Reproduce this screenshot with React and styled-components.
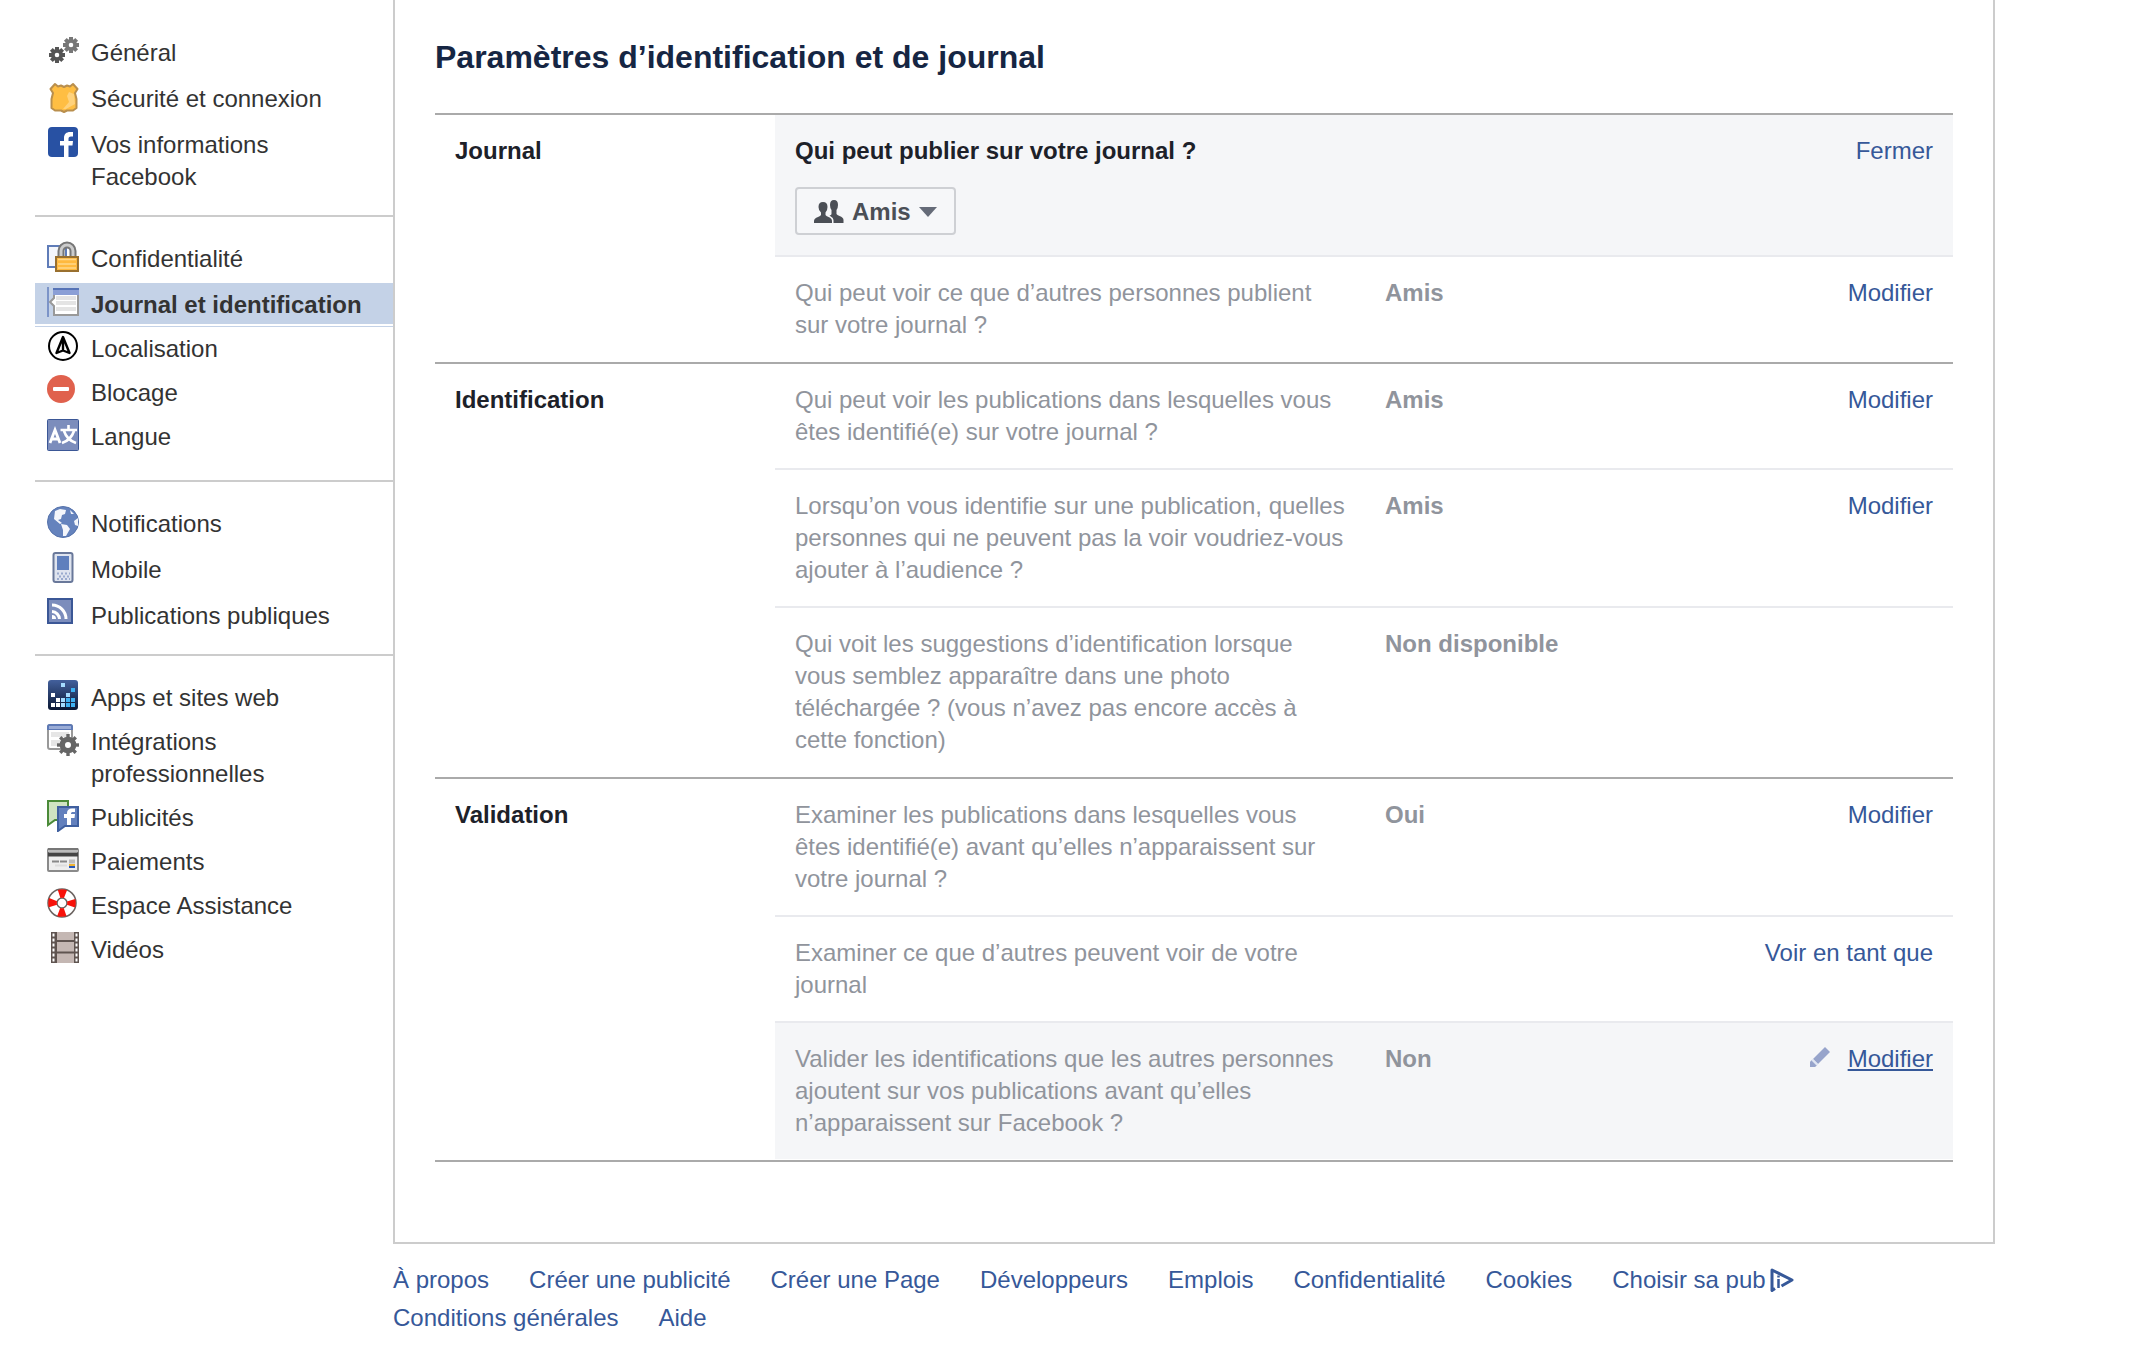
import styled, { createGlobalStyle } from "styled-components";

const GlobalStyle = createGlobalStyle`
  * {
    box-sizing: border-box;
  }
  body {
    margin: 0;
    background: #fff;
    color: #1d2129;
    font-family: "Liberation Sans", Arial, Helvetica, sans-serif;
    font-size: 24px;
    line-height: 32px;
  }
  ul {
    margin: 0;
    padding: 0;
    list-style: none;
  }
`;

const Page = styled.div`
  display: grid;
  grid-template-columns: 358px minmax(0, 1602px);
  padding: 0 35px;
`;

/* sidebar */
const Sidebar = styled.nav`
  padding-top: 11px;
`;
const NavGroup = styled.ul`
  display: flex;
  flex-direction: column;
  gap: ${({ $dense }) => ($dense ? "0" : "2px")};
  padding: 20px 0 ${({ $dense }) => ($dense ? "21px" : "16px")};
  & + & {
    border-top: 2px solid #ccc;
  }
`;
const NavItem = styled.li`
  padding-bottom: 3px;
  &:has([aria-current]) {
    margin-top: 2px;
    padding-bottom: 2px;
    border-bottom: 1px solid #c4d2e7;
  }
`;
const NavLink = styled.a`
  display: flex;
  gap: 12px;
  padding: 6px 24px 3px 12px;
  color: #333;
  text-decoration: none;
  &[aria-current] {
    background: #c4d2e7;
    font-weight: bold;
  }
  svg {
    flex: none;
    margin-top: -2px;
  }
`;

/* settings panel */
const Main = styled.main`
  padding: 39px 40px 80px;
  border: solid #ccc;
  border-width: 0 2px 2px;
`;
const Title = styled.h1`
  margin: 0;
  padding-bottom: 38px;
  color: #162643;
  font-size: 32px;
  line-height: 36px;
`;
const Sections = styled.div`
  border-bottom: 2px solid #aaa;
`;
const Section = styled.section`
  display: grid;
  grid-template-columns: 340px minmax(0, 1fr);
  padding-bottom: 1px;
  border-top: 2px solid #aaa;
`;
const SectionTitle = styled.h2`
  margin: 0;
  padding: 20px;
  font-size: 24px;
  line-height: 32px;
`;
const Row = styled.li`
  display: grid;
  grid-template-columns: 550px minmax(0, 1fr) auto;
  column-gap: 40px;
  padding: 20px;
  background: ${({ $shaded }) => ($shaded ? "#f5f6f8" : "#fff")};
  color: #90949c;
  & + & {
    border-top: 2px solid #e9eaee;
  }
`;
const Question = styled.div`
  font-weight: ${({ $open }) => ($open ? "bold" : "normal")};
  color: ${({ $open }) => ($open ? "#1d2129" : "inherit")};
`;
const Value = styled.strong`
  font-weight: bold;
`;
const Action = styled.a`
  display: flex;
  align-items: flex-start;
  gap: 18px;
  color: #365899;
  text-decoration: none;
  span {
    text-decoration: ${({ $hovered }) => ($hovered ? "underline" : "none")};
    text-decoration-thickness: 2px;
    text-underline-offset: 2px;
    text-decoration-skip-ink: none;
  }
  svg {
    margin-top: 4px;
  }
`;
const AudienceButton = styled.button`
  display: flex;
  align-items: center;
  gap: 8px;
  height: 48px;
  margin-top: 20px;
  padding: 2px 17px 0;
  border: 2px solid #ced0d4;
  border-radius: 4px;
  background: #f6f7f9;
  color: #4b4f56;
  font: bold 24px/32px "Liberation Sans", Arial, sans-serif;
`;

/* footer */
const Footer = styled.footer`
  grid-column: 2;
  padding: 17px 0;
`;
const FooterLinks = styled.ul`
  display: flex;
  flex-wrap: wrap;
  column-gap: 40px;
`;
const FooterLink = styled.a`
  display: flex;
  align-items: center;
  gap: 4px;
  color: #365899;
  line-height: 38px;
  text-decoration: none;
`;

const Svg = ({ children, size = 32, ...rest }) => (
  <svg width={size} height={size} viewBox={`0 0 ${size} ${size}`} aria-hidden="true" {...rest}>
    {children}
  </svg>
);

const Gear = ({ cx, cy, r, hole, fill, teeth = 8, tooth = 4 }) => (
  <g fill="none" stroke={fill}>
    <circle cx={cx} cy={cy} r={(r * 0.76 + hole) / 2} strokeWidth={r * 0.76 - hole} />
    {Array.from({ length: teeth }, (_, i) => (
      <path
        key={i}
        d={`M${cx} ${cy - r * 0.6}V${cy - r}`}
        strokeWidth={tooth}
        transform={`rotate(${(360 / teeth) * i} ${cx} ${cy})`}
      />
    ))}
  </g>
);

const GearsIcon = () => (
  <Svg>
    <Gear cx={10} cy={20} r={8} hole={2.3} fill="#555" />
    <Gear cx={24} cy={10} r={8} hole={2.3} fill="#777" />
  </Svg>
);
const BadgeIcon = () => (
  <Svg>
    <path
      d="M8 3L11 5.500L14 4.500L17 6L20 4.500L23 5.500L26 3L30.500 8L28 12L29.500 18V27L26 29.500H20L17 31L14 29.500H8L4.500 27V18L6 12L3.500 8Z"
      fill="#ffbe43"
      stroke="#b98f4e"
      strokeWidth="2"
      strokeLinejoin="round"
    />
    <path d="M22 11L27 13L28 23L19 28H16L22 21L20 15Z" fill="#ffd27c" />
  </Svg>
);
const FacebookIcon = () => (
  <Svg>
    <rect x="1" y="0" width="30" height="30" rx="4" fill="#2851a3" />
    <path
      d="M17 30V18.500H13V14H17V11C17 7 19.500 5 23 5H26V9.500H24C22 9.500 21.500 10.500 21.500 12V14H26L25.500 18.500H21.500V30Z"
      fill="#fff"
    />
  </Svg>
);
const LockIcon = () => (
  <Svg>
    <rect x="1" y="5" width="18" height="21" fill="#f4f6fb" stroke="#5f7cb8" strokeWidth="2" />
    <path d="M14 18V10A6 6 0 0 1 26 10V18" fill="none" stroke="#777" strokeWidth="7" />
    <path d="M14 18V10A6 6 0 0 1 26 10V18" fill="none" stroke="#ccc" strokeWidth="3" />
    <rect x="9" y="16" width="22" height="14" fill="#ffb93e" stroke="#99702f" strokeWidth="2" />
    <path d="M11 18.500H29M11 23H29M11 27H29" stroke="#ffd78a" strokeWidth="1.500" />
  </Svg>
);
const TimelineIcon = () => (
  <Svg>
    <path d="M1 0V30" stroke="#7c94c8" strokeWidth="2" />
    <path d="M7 3H31V28H7V19L3 15L7 11Z" fill="#fff" stroke="#999" strokeWidth="2" />
    <path d="M9 11H29M9 16H29M9 22H29" stroke="#e4e4e4" strokeWidth="4" />
    <path d="M6 2H32V8H6Z" fill="#8b9fd6" />
    <path d="M6 2H32" stroke="#5673b6" strokeWidth="2" />
  </Svg>
);
const LocationIcon = () => (
  <Svg>
    <circle cx="16" cy="15" r="14" fill="none" stroke="#000" strokeWidth="2" />
    <path d="M16 6L22.500 22L16 19.500L9.500 22ZM16 7V19" fill="none" stroke="#000" strokeWidth="2.400" strokeLinejoin="round" />
  </Svg>
);
const BlockIcon = () => (
  <Svg>
    <circle cx="14" cy="14" r="14" fill="#e0614d" />
    <rect x="6" y="12" width="16" height="4" rx="1" fill="#fff" />
  </Svg>
);
const LanguageIcon = () => (
  <Svg>
    <rect x=".5" y=".5" width="31" height="31" rx="1" fill="#7c8dbc" stroke="#3b5796" />
    <path d="M3 24L8 11L13 24M5 20H11" fill="none" stroke="#fff" strokeWidth="2.800" />
    <path d="M21.500 6V11M13.500 11H30M17 12Q20 21 29 24M27 12Q24 21 15 24" fill="none" stroke="#fff" strokeWidth="2.600" />
  </Svg>
);
const GlobeIcon = () => (
  <Svg>
    <circle cx="16" cy="16" r="15.500" fill="#6583bd" stroke="#5572ab" />
    <path
      d="M8 5L13 3L19 4L18 8L15 9L14 13L11 14L15 17L13 18L7 13ZM14 18L20 19L23 23L19 30L16 30L16 24ZM27 15L31 12L31 20L28 19ZM23 4L27 8L24 8Z"
      fill="#fff"
      opacity=".93"
    />
  </Svg>
);
const PhoneIcon = () => (
  <Svg>
    <rect x="6.500" y="1" width="19" height="29" rx="2" fill="#dfe4ef" stroke="#69789a" strokeWidth="2" />
    <rect x="10" y="4" width="12" height="14" fill="#5f7fbd" />
    <path d="M10 21.500H23M10 27H23" stroke="#9aaace" strokeWidth="2" strokeDasharray="2 2" />
    <path d="M12 24.500H23" stroke="#9aaace" strokeWidth="2" strokeDasharray="2 2" />
  </Svg>
);
const FeedIcon = () => (
  <Svg>
    <rect x="1" y="1" width="24" height="24" fill="#7c8dbc" stroke="#3b5796" strokeWidth="2" />
    <path d="M5 7A14 14 0 0 1 19 21M5 13.500A8 8 0 0 1 12.500 21" fill="none" stroke="#fff" strokeWidth="3" />
    <path d="M5 17A4 4 0 0 1 9 21H5Z" fill="#fff" />
  </Svg>
);
const AppsIcon = () => (
  <Svg>
    <defs>
      <linearGradient id="apps" x2="0" y2="1">
        <stop stopColor="#43609c" />
        <stop offset="1" stopColor="#0a1733" />
      </linearGradient>
    </defs>
    <rect x="1" width="30" height="30" rx="3" fill="url(#apps)" />
    <path d="M4 13h4v4h-4zM4 23h4v4h-4zM9 18h4v4h-4zM9 23h4v4h-4z" fill="#fff" />
    <path d="M14 3h4v4h-4zM14 18h4v4h-4zM14 23h4v4h-4zM19 13h4v4h-4z" fill="#a5dcff" />
    <path d="M24 8h4v4h-4zM24 18h4v4h-4zM19 18h4v4h-4zM19 23h4v4h-4zM24 23h4v4h-4z" fill="#3fb1f2" />
  </Svg>
);
const IntegrationsIcon = () => (
  <Svg>
    <rect x="1" y="1" width="24" height="24" rx="2" fill="#fff" stroke="#999" strokeWidth="2" />
    <path d="M4 8H22V13H4ZM4 16H14V22H4Z" fill="#e6e6e6" />
    <path d="M0 6V3Q0 0 3 0H23Q26 0 26 3V6Z" fill="#5c78b5" />
    <path d="M2 3.500H24" stroke="#9aacd6" strokeWidth="3" />
    <Gear cx={21} cy={21} r={11} hole={3} fill="#666" tooth={3.4} />
  </Svg>
);
const AdsIcon = () => (
  <Svg>
    <path d="M1 1H21V20H8L1 25Z" fill="#cfe3c2" stroke="#4a8a38" strokeWidth="2" />
    <path d="M11 7H31V26H18L11 31Z" fill="#6380bd" stroke="#3f5f9f" strokeWidth="2" />
    <path
      d="M20 25V18H17V14H20V13C20 10 22 8.500 25 8.500H28V12H26C24.500 12 24 12.500 24 14H28L27.500 18H24V25Z"
      fill="#fff"
    />
  </Svg>
);
const CardIcon = () => (
  <Svg>
    <rect x="1" y="5" width="30" height="22" rx="1" fill="#eee" stroke="#8a8a8a" strokeWidth="2" />
    <path d="M1 5H31" stroke="#777" strokeWidth="2" />
    <path d="M1 7H31" stroke="#bbb" strokeWidth="2" />
    <path d="M1 10.500H31" stroke="#444" strokeWidth="4" />
    <path d="M5 17.500H20" stroke="#888" strokeWidth="2" strokeDasharray="7 1" />
    <path d="M22 17.500H28" stroke="#bbb" strokeWidth="4" />
    <path d="M8 21.500H20" stroke="#ddd" strokeWidth="2" />
    <rect x="22" y="20" width="6" height="2" fill="#f0b432" />
    <rect x="22" y="22" width="6" height="2" fill="#2757b8" />
  </Svg>
);
const HelpIcon = () => (
  <Svg>
    <circle cx="15" cy="15" r="9.500" fill="none" stroke="#6b6360" strokeWidth="10.500" />
    <circle cx="15" cy="15" r="9.500" fill="none" stroke="#fff" strokeWidth="7.500" />
    <circle
      cx="15"
      cy="15"
      r="9.500"
      fill="none"
      stroke="#f8120a"
      strokeWidth="8.500"
      strokeDasharray="6.500 8.423"
      strokeDashoffset="3.250"
    />
  </Svg>
);
const FilmIcon = () => (
  <Svg>
    <rect x="4" y="0" width="28" height="31" fill="#5f5450" />
    <path d="M10 0H27V8H10ZM10 10H27V19.500H10ZM10 21.500H27V31H10Z" fill="#c4b7b3" />
    <path d="M6.500 1.500V31M29.500 1.500V31" stroke="#fff" strokeWidth="2" strokeDasharray="3 2" />
  </Svg>
);
const FriendsIcon = () => (
  <svg width="30" height="24" viewBox="0 0 30 24" aria-hidden="true">
    <g fill="#4b4f56">
      <path d="M20 0Q24 0 24 5Q24 8 22.500 10V14Q23 15 25.500 16Q29.500 17.500 29.500 20V23H19.500V20Q19 17.500 15.500 15.500Q17.500 15 17.500 14V10Q16 8 16 5Q16 0 20 0Z" />
      <path d="M9 2Q13.500 2 13.500 7Q13.500 10.500 11.500 12.500V15Q12 16 14.500 17Q18 18.500 18 21V23H0V21Q0 18.500 4 17Q6.500 16 7 15V12.500Q4.500 10.500 4.500 7Q4.500 2 9 2Z" />
    </g>
  </svg>
);
const CaretIcon = () => (
  <svg width="18" height="10" viewBox="0 0 18 10" aria-hidden="true">
    <path d="M0 0H18L9 10Z" fill="#656b78" />
  </svg>
);
const PencilIcon = () => (
  <Svg size={20}>
    <path d="M15 0L20 5L8 17L3 12Z" fill="#97a4cb" />
    <path d="M1.500 13L7 18.500L5 20H0V15Z" fill="#97a4cb" />
    <path d="M2 12.500L7.500 18" stroke="#dfe5f2" strokeWidth="2" />
  </Svg>
);
const AdChoicesIcon = () => (
  <Svg size={24}>
    <path d="M5 20.500L2 22.500V2L22 12L11.500 18" fill="none" stroke="#365899" strokeWidth="3" strokeLinejoin="round" />
    <path d="M8.500 11V20M8.500 7.500V9.500" stroke="#365899" strokeWidth="2.500" />
  </Svg>
);

const navGroups = [
  {
    items: [
      ["Général", GearsIcon],
      ["Sécurité et connexion", BadgeIcon],
      ["Vos informations Facebook", FacebookIcon],
    ],
  },
  {
    dense: true,
    items: [
      ["Confidentialité", LockIcon],
      ["Journal et identification", TimelineIcon],
      ["Localisation", LocationIcon],
      ["Blocage", BlockIcon],
      ["Langue", LanguageIcon],
    ],
  },
  {
    items: [
      ["Notifications", GlobeIcon],
      ["Mobile", PhoneIcon],
      ["Publications publiques", FeedIcon],
    ],
  },
  {
    dense: true,
    items: [
      ["Apps et sites web", AppsIcon],
      ["Intégrations professionnelles", IntegrationsIcon],
      ["Publicités", AdsIcon],
      ["Paiements", CardIcon],
      ["Espace Assistance", HelpIcon],
      ["Vidéos", FilmIcon],
    ],
  },
];

const sections = [
  {
    title: "Journal",
    rows: [
      { question: "Qui peut publier sur votre journal ?", action: "Fermer", audience: "Amis" },
      {
        question: "Qui peut voir ce que d’autres personnes publient sur votre journal ?",
        value: "Amis",
        action: "Modifier",
      },
    ],
  },
  {
    title: "Identification",
    rows: [
      {
        question: "Qui peut voir les publications dans lesquelles vous êtes identifié(e) sur votre journal ?",
        value: "Amis",
        action: "Modifier",
      },
      {
        question:
          "Lorsqu’on vous identifie sur une publication, quelles personnes qui ne peuvent pas la voir voudriez-vous ajouter à l’audience ?",
        value: "Amis",
        action: "Modifier",
      },
      {
        question:
          "Qui voit les suggestions d’identification lorsque vous semblez apparaître dans une photo téléchargée ? (vous n’avez pas encore accès à cette fonction)",
        value: "Non disponible",
      },
    ],
  },
  {
    title: "Validation",
    rows: [
      {
        question:
          "Examiner les publications dans lesquelles vous êtes identifié(e) avant qu’elles n’apparaissent sur votre journal ?",
        value: "Oui",
        action: "Modifier",
      },
      { question: "Examiner ce que d’autres peuvent voir de votre journal", action: "Voir en tant que" },
      {
        question:
          "Valider les identifications que les autres personnes ajoutent sur vos publications avant qu’elles n’apparaissent sur Facebook ?",
        value: "Non",
        action: "Modifier",
        hovered: true,
      },
    ],
  },
];

const footerLinks = [
  "À propos",
  "Créer une publicité",
  "Créer une Page",
  "Développeurs",
  "Emplois",
  "Confidentialité",
  "Cookies",
  "Choisir sa pub",
  "Conditions générales",
  "Aide",
];

const SettingRow = ({ question, value, action, audience, hovered }) => (
  <Row $shaded={audience || hovered}>
    <Question $open={audience}>
      {question}
      {audience && (
        <AudienceButton type="button">
          <FriendsIcon />
          {audience}
          <CaretIcon />
        </AudienceButton>
      )}
    </Question>
    <Value>{value}</Value>
    {action && (
      <Action href="#" $hovered={hovered}>
        {hovered && <PencilIcon />}
        <span>{action}</span>
      </Action>
    )}
  </Row>
);

const App = () => {
  return (
    <>
      <GlobalStyle />
      <Page>
        <Sidebar>
          {navGroups.map((group, i) => (
            <NavGroup key={i} $dense={group.dense}>
              {group.items.map(([label, Icon]) => (
                <NavItem key={label}>
                  <NavLink href="#" aria-current={label === "Journal et identification" ? "page" : undefined}>
                    <Icon />
                    <span>{label}</span>
                  </NavLink>
                </NavItem>
              ))}
            </NavGroup>
          ))}
        </Sidebar>
        <Main>
          <Title>Paramètres d’identification et de journal</Title>
          <Sections>
            {sections.map((section) => (
              <Section key={section.title}>
                <SectionTitle>{section.title}</SectionTitle>
                <ul>
                  {section.rows.map((row) => (
                    <SettingRow key={row.question} {...row} />
                  ))}
                </ul>
              </Section>
            ))}
          </Sections>
        </Main>
        <Footer>
          <FooterLinks>
            {footerLinks.map((label) => (
              <li key={label}>
                <FooterLink href="#">
                  {label}
                  {label === "Choisir sa pub" && <AdChoicesIcon />}
                </FooterLink>
              </li>
            ))}
          </FooterLinks>
        </Footer>
      </Page>
    </>
  );
};

export default App;
